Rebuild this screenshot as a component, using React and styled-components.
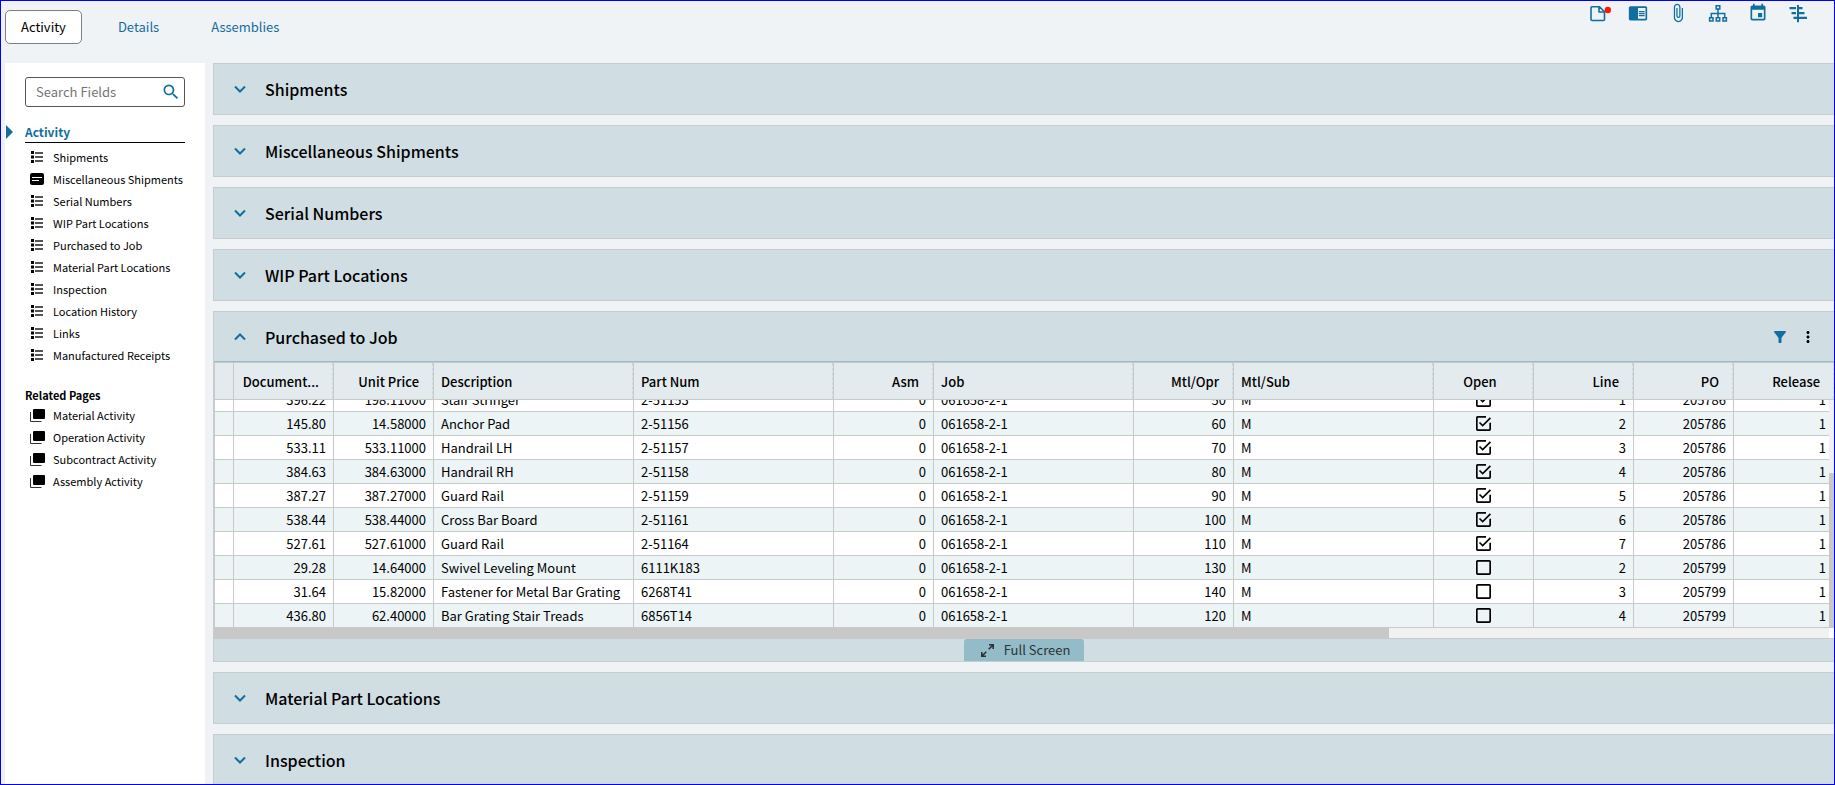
import React, { useLayoutEffect, useRef, useState } from "react";
import styled, { createGlobalStyle } from "styled-components";
import {
  MdAttachFile,
  MdChromeReaderMode,
  MdEvent,
  MdFilterAlt,
  MdMoreVert,
  MdSearch,
} from "react-icons/md";

const columns = [
  { key: "docPrice", label: "Document...", width: 100, align: "right" },
  { key: "unitPrice", label: "Unit Price", width: 100, align: "right" },
  { key: "description", label: "Description", width: 200 },
  { key: "partNum", label: "Part Num", width: 200 },
  { key: "asm", label: "Asm", width: 100, align: "right" },
  { key: "job", label: "Job", width: 200 },
  { key: "mtlOpr", label: "Mtl/Opr", width: 100, align: "right" },
  { key: "mtlSub", label: "Mtl/Sub", width: 200 },
  { key: "open", label: "Open", width: 100, align: "center" },
  { key: "line", label: "Line", width: 100, align: "right" },
  { key: "po", label: "PO", width: 100, align: "right" },
  { key: "release", label: "Release", width: 100, align: "right" },
];

const makeRow = (docPrice, unitPrice, description, partNum, mtlOpr, open, line, po) => ({
  docPrice,
  unitPrice,
  description,
  partNum,
  asm: "0",
  job: "061658-2-1",
  mtlOpr,
  mtlSub: "M",
  open,
  line,
  po,
  release: "1",
});

const purchases = [
  makeRow("396.22", "198.11000", "Stair Stringer", "2-51153", "50", true, "1", "205786"),
  makeRow("145.80", "14.58000", "Anchor Pad", "2-51156", "60", true, "2", "205786"),
  makeRow("533.11", "533.11000", "Handrail LH", "2-51157", "70", true, "3", "205786"),
  makeRow("384.63", "384.63000", "Handrail RH", "2-51158", "80", true, "4", "205786"),
  makeRow("387.27", "387.27000", "Guard Rail", "2-51159", "90", true, "5", "205786"),
  makeRow("538.44", "538.44000", "Cross Bar Board", "2-51161", "100", true, "6", "205786"),
  makeRow("527.61", "527.61000", "Guard Rail", "2-51164", "110", true, "7", "205786"),
  makeRow("29.28", "14.64000", "Swivel Leveling Mount", "6111K183", "130", false, "2", "205799"),
  makeRow("31.64", "15.82000", "Fastener for Metal Bar Grating", "6268T41", "140", false, "3", "205799"),
  makeRow("436.80", "62.40000", "Bar Grating Stair Treads", "6856T14", "120", false, "4", "205799"),
];

const fields = [
  "Shipments",
  "Miscellaneous Shipments",
  "Serial Numbers",
  "WIP Part Locations",
  "Purchased to Job",
  "Material Part Locations",
  "Inspection",
  "Location History",
  "Links",
  "Manufactured Receipts",
];

const relatedPages = [
  "Material Activity",
  "Operation Activity",
  "Subcontract Activity",
  "Assembly Activity",
];

/* icons */

const ListIcon = () => (
  <svg width="14" height="12" viewBox="0 0 14 12" aria-hidden="true">
    <path fill="#000" d="M1 0h3v3H1zM1 4.500h3v3H1zM1 9h3v3H1z" />
    <path fill="#555" d="M5 1h8v2H5zM5 5h8v2H5zM5 9h8v2H5z" />
  </svg>
);

const CardIcon = () => (
  <svg width="14" height="12" viewBox="0 0 14 12" aria-hidden="true">
    <rect width="14" height="12" rx="2" fill="#000" />
    <path fill="#fff" d="M2 4h10v1H2zM2 7h7v1H2z" />
  </svg>
);

const PagesIcon = () => (
  <svg width="15" height="13" viewBox="0 0 15 13" aria-hidden="true">
    <rect x="3" width="12" height="10" rx="1" fill="#000" />
    <path fill="none" stroke="#333" d="M.5 3v9.500h11" />
  </svg>
);

const NoteIcon = () => (
  <svg width="26" height="20" viewBox="0 0 26 20" aria-hidden="true">
    <path
      fill="none"
      stroke="#126e9f"
      strokeWidth="1.600"
      strokeLinejoin="round"
      d="M7 3.800h7.500l5 5v7.700q0 1-1 1h-11.500q-1 0-1-1v-11.700q0-1 1-1zM14 3.800v5.200h5.300"
    />
    <circle cx="22.800" cy="7" r="3.200" fill="#ff1a00" />
  </svg>
);

const TreeIcon = () => (
  <svg width="20" height="20" viewBox="0 0 20 20" aria-hidden="true">
    <g fill="none" stroke="#126e9f" strokeWidth="1.500">
      <path d="M8.200 2.800h3.600v3.200h-3.600zM1.600 14.800h3.400v3.200h-3.400zM8.300 14.800h3.400v3.200h-3.400zM15 14.800h3.400v3.200h-3.400z" />
      <path d="M10 6v8.800M3.300 14.800v-4.300h13.400v4.300" />
    </g>
  </svg>
);

const GanttIcon = () => (
  <svg width="20" height="20" viewBox="0 0 20 20" aria-hidden="true">
    <path
      fill="#126e9f"
      d="M9 2h2v17.200h-2zM1.500 4h6.500v2.200h-6.500zM11 4h3.500v2.200h-3.500zM3.500 9h4.500v2.200h-4.500zM11 9h5.500v2.200h-5.500zM5.500 13.700h3.500v2.200h-3.500zM11 13.700h8v2.200h-8z"
    />
  </svg>
);

const ExpandIcon = () => (
  <svg width="13" height="13" viewBox="0 0 13 13" aria-hidden="true">
    <path fill="none" stroke="#2b3338" strokeWidth="1.600" d="M8 .800h4.200v4.200M12 1l-4.300 4.300M.800 8v4.200h4.200M1 12l4.300-4.300" />
  </svg>
);

const Chevron = ({ up }) => (
  <svg width="12" height="8" viewBox="0 0 12 8" aria-hidden="true">
    <path fill="none" stroke="#126e9f" strokeWidth="2" d={up ? "M1 6.500l5-5 5 5" : "M1 1.500l5 5 5-5"} />
  </svg>
);

const CheckMark = ({ checked }) => (
  <svg width="15" height="15" viewBox="3 3 18 18" aria-hidden="true">
    <path
      d={
        checked
          ? "M19 19H5V5h10V3H5c-1.110 0-2 .890-2 2v14a2 2 0 0 0 2 2h14a2 2 0 0 0 2-2v-8h-2M7.910 10.080L6.500 11.500 11 16 21 6l-1.410-1.420L11 13.170z"
          : "M19 3H5c-1.110 0-2 .890-2 2v14a2 2 0 0 0 2 2h14a2 2 0 0 0 2-2V5c0-1.110-.9-2-2-2m0 2v14H5V5z"
      }
    />
  </svg>
);

function OpenBox({ initial, label }) {
  const [checked, setChecked] = useState(initial);
  return (
    <CheckLabel>
      <input type="checkbox" aria-label={label} checked={checked} onChange={() => setChecked(!checked)} />
      <CheckMark checked={checked} />
    </CheckLabel>
  );
}

function PurchaseGrid() {
  const scroller = useRef(null);

  useLayoutEffect(() => {
    scroller.current.scrollTop = scroller.current.scrollHeight;
  }, []);

  return (
    <GridFrame>
      <GridScroller ref={scroller}>
        <Table>
          <colgroup>
            <col width="20" />
            {columns.map((c) => (
              <col key={c.key} width={c.width} />
            ))}
          </colgroup>
          <thead>
            <tr>
              <HeadCell aria-label="Row marker" />
              {columns.map((c) => (
                <HeadCell key={c.key} scope="col">
                  <HeadText $align={c.align}>{c.label}</HeadText>
                </HeadCell>
              ))}
            </tr>
          </thead>
          <tbody>
            {purchases.map((row) => (
              <Row key={row.partNum}>
                <Cell />
                {columns.map((c) => (
                  <Cell key={c.key} $align={c.align}>
                    {c.key === "open" ? (
                      <OpenBox initial={row.open} label={`Open ${row.partNum}`} />
                    ) : (
                      row[c.key]
                    )}
                  </Cell>
                ))}
              </Row>
            ))}
          </tbody>
        </Table>
      </GridScroller>
      <VerticalTrack>
        <VerticalThumb />
      </VerticalTrack>
      <HorizontalBar>
        <HorizontalTrack>
          <HorizontalThumb />
        </HorizontalTrack>
      </HorizontalBar>
    </GridFrame>
  );
}

function Section({ title, open, children }) {
  return (
    <Panel>
      <PanelHeader $open={open}>
        <PanelToggle type="button" aria-expanded={!!open}>
          <Chevron up={open} />
          <PanelTitle>{title}</PanelTitle>
        </PanelToggle>
        {open && (
          <PanelActions>
            <IconButton type="button" aria-label="Filter">
              <MdFilterAlt size={18} />
            </IconButton>
            <IconButton type="button" aria-label="More" $dark>
              <MdMoreVert size={18} />
            </IconButton>
          </PanelActions>
        )}
      </PanelHeader>
      {children}
    </Panel>
  );
}

export default function App() {
  return (
    <>
      <GlobalStyle />
      <Page>
        <TopBar>
          <Tabs>
            <Tab type="button" $active>Activity</Tab>
            <Tab type="button">Details</Tab>
            <Tab type="button">Assemblies</Tab>
          </Tabs>
          <Tools>
            <ToolButton type="button" aria-label="Notes"><NoteIcon /></ToolButton>
            <ToolButton type="button" aria-label="Reader"><MdChromeReaderMode size={20} /></ToolButton>
            <ToolButton type="button" aria-label="Attachments"><MdAttachFile size={20} /></ToolButton>
            <ToolButton type="button" aria-label="Tree"><TreeIcon /></ToolButton>
            <ToolButton type="button" aria-label="Calendar"><MdEvent size={20} /></ToolButton>
            <ToolButton type="button" aria-label="Schedule"><GanttIcon /></ToolButton>
          </Tools>
        </TopBar>
        <Body>
          <Sidebar>
            <SearchBox>
              <input type="text" placeholder="Search Fields" aria-label="Search Fields" />
              <MdSearch size={20} color="#126e9f" />
            </SearchBox>
            <NavTitle href="#activity">Activity</NavTitle>
            <NavList>
              {fields.map((name) => (
                <li key={name}>
                  <NavLink href="#field">
                    {name === "Miscellaneous Shipments" ? <CardIcon /> : <ListIcon />}
                    {name}
                  </NavLink>
                </li>
              ))}
            </NavList>
            <RelatedTitle>Related Pages</RelatedTitle>
            <NavList>
              {relatedPages.map((name) => (
                <li key={name}>
                  <NavLink href="#page">
                    <PagesIcon />
                    {name}
                  </NavLink>
                </li>
              ))}
            </NavList>
          </Sidebar>
          <Content>
            <Section title="Shipments" />
            <Section title="Miscellaneous Shipments" />
            <Section title="Serial Numbers" />
            <Section title="WIP Part Locations" />
            <Section title="Purchased to Job" open>
              <PurchaseGrid />
              <PanelFooter>
                <FullScreenButton type="button">
                  <ExpandIcon />
                  Full Screen
                </FullScreenButton>
              </PanelFooter>
            </Section>
            <Section title="Material Part Locations" />
            <Section title="Inspection" />
          </Content>
        </Body>
      </Page>
    </>
  );
}

const GlobalStyle = createGlobalStyle`
  * {
    box-sizing: border-box;
  }
  body {
    margin: 0;
    font-family: "Noto Sans CJK SC", "Open Sans", sans-serif;
    font-size: 13px;
    line-height: 20px;
    color: #000;
  }
  button, input {
    font: inherit;
  }
  svg {
    flex: none;
    display: block;
  }
`

const Page = styled.div`
  display: flex;
  flex-direction: column;
  height: 100vh;
  overflow: hidden;
  border: 1px solid #0000ff;
  background: #eff3f6;
`

const TopBar = styled.header`
  display: flex;
  justify-content: space-between;
  flex: none;
  height: 62px;
  padding: 9px 16px 0 4px;
`

const Tabs = styled.nav`
  display: flex;
  gap: 20px;
`

const Tab = styled.button`
  height: 34px;
  padding: 0 15px;
  border: 1px solid ${(p) => (p.$active ? "#7f7f7f" : "transparent")};
  border-radius: 5px;
  background: ${(p) => (p.$active ? "#fff" : "transparent")};
  color: ${(p) => (p.$active ? "#000" : "#126e9f")};
`

const Tools = styled.div`
  display: flex;
  align-items: flex-start;
  margin-top: -7px;
`

const ToolButton = styled.button`
  display: flex;
  justify-content: center;
  width: 40px;
  padding: 0;
  border: 0;
  background: none;
  color: #126e9f;
`

const Body = styled.div`
  display: flex;
  flex: 1;
  min-height: 0;
  padding-left: 4px;
`

const Sidebar = styled.aside`
  flex: none;
  width: 200px;
  padding: 14px 20px;
  background: #fff;
`

const SearchBox = styled.label`
  display: flex;
  align-items: center;
  height: 30px;
  padding: 0 3px 0 10px;
  border: 1px solid #555;
  border-radius: 3px;
  input {
    flex: 1;
    min-width: 0;
    padding: 0;
    border: 0;
    outline: 0;
    background: none;
  }
  input::placeholder {
    color: #757575;
  }
`

const NavTitle = styled.a`
  position: relative;
  display: block;
  margin: 14px 0 3px;
  border-bottom: 1px solid #000;
  color: #126e9f;
  font-size: 12px;
  font-weight: 700;
  line-height: 21px;
  text-decoration: none;
  &::before {
    content: "";
    position: absolute;
    left: -19px;
    top: 4px;
    border: solid transparent;
    border-width: 7px 0 7px 7px;
    border-left-color: #126e9f;
  }
`

const NavList = styled.ul`
  margin: 0;
  padding: 0;
  list-style: none;
`

const NavLink = styled.a`
  display: grid;
  grid-template-columns: 18px 1fr;
  align-items: center;
  column-gap: 5px;
  height: 22px;
  padding-left: 5px;
  color: #000;
  font-size: 11px;
  text-decoration: none;
  white-space: nowrap;
`

const RelatedTitle = styled.h2`
  margin: 20px 0 0;
  font-size: 11px;
  font-weight: 700;
  line-height: 18px;
`

const Content = styled.main`
  display: flex;
  flex-direction: column;
  gap: 10px;
  flex: 1;
  min-width: 0;
  margin-left: 8px;
  overflow: hidden;
`

const Panel = styled.section`
  flex: none;
  border: 1px solid #c8cccc;
  border-right: 0;
  background: #d0dde2;
`

const PanelHeader = styled.div`
  display: flex;
  align-items: center;
  justify-content: space-between;
  height: 50px;
  padding: 0 17px 0 20px;
  border-bottom: 1px solid ${(p) => (p.$open ? "#93bcc8" : "transparent")};
`

const PanelToggle = styled.button`
  display: flex;
  align-items: center;
  gap: 19px;
  padding: 0;
  border: 0;
  background: none;
  color: #000;
`

const PanelTitle = styled.span`
  font-size: 16px;
  font-weight: 500;
  line-height: 24px;
`

const PanelActions = styled.div`
  display: flex;
  gap: 10px;
`

const IconButton = styled.button`
  padding: 0;
  border: 0;
  background: none;
  color: ${(p) => (p.$dark ? "#000" : "#126e9f")};
`

const GridFrame = styled.div`
  position: relative;
`

const GridScroller = styled.div`
  max-height: 266px;
  overflow: auto;
  scrollbar-width: none;
`

const Table = styled.table`
  width: 100%;
  min-width: 1620px;
  table-layout: fixed;
  border-collapse: separate;
  border-spacing: 0;
`

const HeadCell = styled.th`
  position: sticky;
  top: 0;
  z-index: 1;
  height: 38px;
  padding: 0;
  border: solid #c8caca;
  border-width: 1px 1px 1px 0;
  background: #e3ebee;
  font-weight: 500;
  &:first-child {
    border-left-width: 1px;
  }
  &:last-child {
    border-right-width: 0;
  }
`

const HeadText = styled.div`
  height: 36px;
  padding: 0 13px 0 7px;
  border-right: 1px dashed #cbd8dc;
  line-height: 38px;
  text-align: ${(p) => p.$align || "left"};
  white-space: nowrap;
`

const Row = styled.tr`
  background: #fff;
  &:nth-child(even) {
    background: #ecf4f6;
  }
`

const Cell = styled.td`
  height: 24px;
  padding: 0 7px;
  border: solid #c8caca;
  border-width: 0 1px 1px 0;
  text-align: ${(p) => p.$align || "left"};
  white-space: nowrap;
  &:first-child {
    border-left-width: 1px;
  }
`

const CheckLabel = styled.label`
  display: flex;
  justify-content: center;
  position: relative;
  input {
    position: absolute;
    width: 15px;
    height: 15px;
    margin: 0;
    opacity: 0;
  }
`

const VerticalTrack = styled.div`
  position: absolute;
  top: 38px;
  right: 0;
  bottom: 11px;
  display: flex;
  align-items: flex-end;
  width: 5px;
  background: #f1f1f1;
`

const VerticalThumb = styled.div`
  width: 100%;
  height: 68%;
  background: #c8c8c8;
`

const HorizontalBar = styled.div`
  padding-right: 5px;
  border-bottom: 1px solid #c8caca;
  background: #fff;
`

const HorizontalTrack = styled.div`
  background: #f1f1f1;
`

const HorizontalThumb = styled.div`
  width: 1175px;
  max-width: 73%;
  height: 10px;
  background: #c8c8c8;
`

const PanelFooter = styled.div`
  display: flex;
  justify-content: center;
`

const FullScreenButton = styled.button`
  display: flex;
  align-items: center;
  justify-content: center;
  gap: 10px;
  width: 120px;
  height: 22px;
  padding: 0 0 0 3px;
  border: 0;
  border-radius: 3px 3px 0 0;
  background: #93bcc8;
  color: #2b3338;
`
